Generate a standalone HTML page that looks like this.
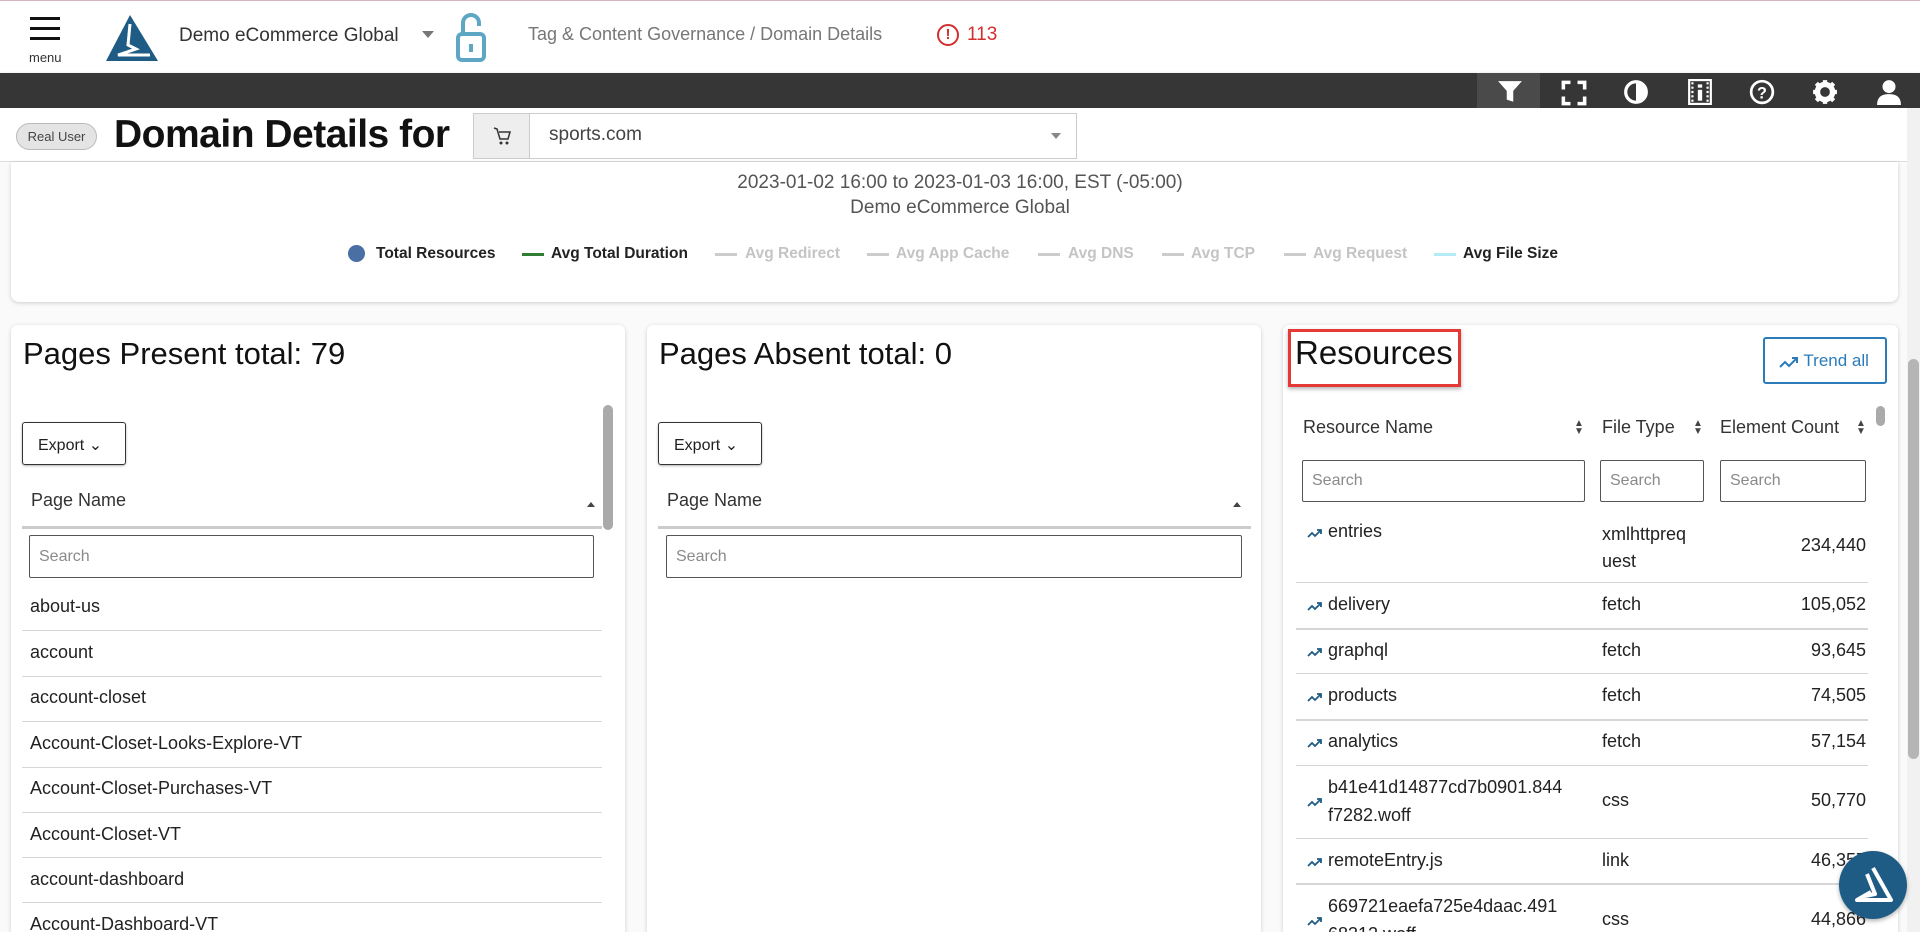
<!DOCTYPE html>
<html style="width:1920px;height:932px;overflow:hidden"><head><meta charset="utf-8">
<style>
*{box-sizing:border-box;margin:0;padding:0}
body{width:1920px;height:932px;overflow:hidden;background:#fafafa;font-family:"Liberation Sans",Arial,sans-serif;color:#212121;position:relative}
.a{position:absolute;white-space:nowrap}
.card{position:absolute;background:#fff;border-radius:6px;box-shadow:0 1px 4px rgba(0,0,0,.18)}
.inp{position:absolute;border:1px solid #555;border-radius:2px;background:#fff;color:#8a8a8a;font-size:16px;padding-left:9px;display:flex;align-items:center}
.row{position:absolute;font-size:18px;color:#222}
.hl{position:absolute;height:1px;background:#d6d6d6}
.ic{position:absolute;top:78px;width:26px;height:26px}
.leg{position:absolute;top:245px;font-size:15.5px;font-weight:bold;white-space:nowrap}
.ll{position:absolute;top:253px;width:22px;height:3px;background:#ccc}
.tr{position:absolute;width:16px;height:10px}
</style></head><body>
<!-- header -->
<div class="a" style="left:0;top:0;width:1920px;height:73px;background:#fff;border-top:1px solid #d8b4c0"></div>
<div class="a" style="left:30px;top:17px;width:30px;height:3px;background:#111;box-shadow:0 10px 0 #111,0 20px 0 #111"></div>
<div class="a" style="left:29px;top:50px;font-size:13px;color:#333">menu</div>
<svg class="a" style="left:106px;top:15px" width="52" height="46" viewBox="0 0 52 46"><polygon points="24,0 52,46 0,46" fill="#1f5c85"/><path d="M24 9 L22 30 L30 34 L12 40 L44 40" fill="none" stroke="#fff" stroke-width="3" stroke-linejoin="miter"/></svg>
<div class="a" style="left:179px;top:25px;font-size:19px;color:#333">Demo eCommerce Global</div>
<div class="a" style="left:422px;top:31px;width:0;height:0;border-left:6px solid transparent;border-right:6px solid transparent;border-top:7px solid #777"></div>
<svg class="a" style="left:455px;top:12px" width="32" height="50" viewBox="0 0 32 50"><path d="M8 22 V11 a8 8 0 0 1 16 0 V14" fill="none" stroke="#5ea7c4" stroke-width="4"/><rect x="3" y="22" width="26" height="26" rx="4" fill="none" stroke="#5ea7c4" stroke-width="4"/><rect x="14" y="32" width="4" height="8" fill="#5ea7c4"/></svg>
<div class="a" style="left:528px;top:24px;font-size:18px;color:#777">Tag &amp; Content Governance / Domain Details</div>
<div class="a" style="left:937px;top:24px;width:22px;height:22px;border:2px solid #d32f2f;border-radius:50%;color:#d32f2f;font-size:15px;font-weight:bold;text-align:center;line-height:18px">!</div>
<div class="a" style="left:967px;top:24px;font-size:19px;color:#d32f2f">113</div>
<!-- dark bar -->
<div class="a" style="left:0;top:73px;width:1920px;height:35px;background:#363636;box-shadow:0 2px 4px rgba(0,0,0,.4)"></div>
<div class="a" style="left:1477px;top:73px;width:63px;height:35px;background:#4a4a4a"></div>
<svg class="ic" style="left:1497px;top:79px" width="24" height="24" viewBox="0 0 24 24"><path d="M1 2h22l-8 9v10l-6-2v-8z" fill="#fff"/></svg>
<svg class="ic" style="left:1561px;top:80px" width="22" height="22" viewBox="0 0 22 22"><path d="M2 8V2h6M14 2h6v6M20 14v6h-6M8 20H2v-6" fill="none" stroke="#fff" stroke-width="3"/></svg>
<svg class="ic" style="left:1623px;top:79px" width="24" height="24" viewBox="0 0 24 24"><circle cx="12" cy="12" r="9.5" fill="none" stroke="#fff" stroke-width="3"/><path d="M12 2a10 10 0 0 1 0 20z" fill="#fff"/></svg>
<svg class="ic" style="left:1687px;top:79px" width="22" height="24" viewBox="0 0 22 24"><rect x="1" y="1" width="20" height="22" fill="none" stroke="#fff" stroke-width="2"/><path d="M4 3v18M18 3v18" stroke="#fff" stroke-width="2" stroke-dasharray="2 2"/><rect x="9" y="5" width="4" height="3" fill="#fff"/><rect x="9" y="10" width="4" height="10" fill="#fff"/></svg>
<svg class="ic" style="left:1749px;top:79px" width="24" height="24" viewBox="0 0 24 24"><circle cx="12" cy="12" r="10" fill="none" stroke="#fff" stroke-width="2.5"/><text x="12" y="18" font-size="15" font-weight="bold" fill="#fff" text-anchor="middle" font-family="Liberation Sans">?</text></svg>
<svg class="ic" style="left:1812px;top:79px" width="24" height="24" viewBox="0 0 24 24"><circle cx="12" cy="12" r="7" fill="none" stroke="#fff" stroke-width="5"/><path d="M12 1v6M12 17v6M1 12h6M17 12h6M4 4l4 4M16 16l4 4M4 20l4-4M16 8l4-4" stroke="#fff" stroke-width="4"/></svg>
<svg class="ic" style="left:1876px;top:79px" width="24" height="24" viewBox="0 0 24 24"><circle cx="12" cy="7" r="6" fill="#fff"/><path d="M1 24c0-8 5-10 11-10s11 2 11 10z" fill="#fff"/></svg>
<!-- title row -->
<div class="a" style="left:0;top:108px;width:1920px;height:54px;background:#fff;border-bottom:1px solid #ddd"></div>
<div class="a" style="left:16px;top:123px;width:81px;height:27px;border:1px solid #bbb;border-radius:14px;background:#e4e4e4;font-size:13px;color:#444;text-align:center;line-height:25px">Real User</div>
<div class="a" style="left:114px;top:113px;font-size:39px;font-weight:bold;color:#111;letter-spacing:-0.5px">Domain Details for</div>
<div class="a" style="left:473px;top:113px;width:604px;height:46px;border:1px solid #ccc;background:#fff"></div>
<div class="a" style="left:474px;top:114px;width:56px;height:44px;background:#eee;border-right:1px solid #ccc"></div>
<svg class="a" style="left:492px;top:126px" width="20" height="20" viewBox="0 0 20 20"><path d="M2 2l3 1 3 10h8l2-7H7" fill="none" stroke="#333" stroke-width="1.5"/><circle cx="9" cy="17" r="1.5" fill="#333"/><circle cx="15" cy="17" r="1.5" fill="#333"/></svg>
<div class="a" style="left:549px;top:124px;font-size:19px;color:#444">sports.com</div>
<div class="a" style="left:1051px;top:133px;width:0;height:0;border-left:5px solid transparent;border-right:5px solid transparent;border-top:6px solid #888"></div>
<!-- chart card -->
<div class="card" style="left:11px;top:162px;width:1887px;height:140px;border-radius:0 0 8px 8px"></div>
<div class="a" style="left:0;top:172px;width:1920px;text-align:center;font-size:19px;color:#555">2023-01-02 16:00 to 2023-01-03 16:00, EST (-05:00)</div>
<div class="a" style="left:0;top:197px;width:1920px;text-align:center;font-size:19px;color:#555">Demo eCommerce Global</div>
<div class="a" style="left:348px;top:245px;width:17px;height:17px;border-radius:50%;background:#4a6fa5"></div>
<div class="leg" style="left:376px;color:#222">Total Resources</div>
<div class="ll" style="left:522px;background:#2e7d32"></div><div class="leg" style="left:551px;color:#222">Avg Total Duration</div>
<div class="ll" style="left:715px"></div><div class="leg" style="left:745px;color:#c4c4c4">Avg Redirect</div>
<div class="ll" style="left:867px"></div><div class="leg" style="left:896px;color:#c4c4c4">Avg App Cache</div>
<div class="ll" style="left:1038px"></div><div class="leg" style="left:1068px;color:#c4c4c4">Avg DNS</div>
<div class="ll" style="left:1162px"></div><div class="leg" style="left:1191px;color:#c4c4c4">Avg TCP</div>
<div class="ll" style="left:1284px"></div><div class="leg" style="left:1313px;color:#c4c4c4">Avg Request</div>
<div class="ll" style="left:1434px;background:#b3ecf5"></div><div class="leg" style="left:1463px;color:#222">Avg File Size</div>
<!-- card 1 -->
<div class="card" style="left:11px;top:325px;width:614px;height:620px"></div>
<div class="a" style="left:23px;top:336px;font-size:31px;font-weight:500;color:#111">Pages Present total: 79</div>
<div class="a" style="left:603px;top:405px;width:10px;height:125px;border-radius:5px;background:#aaa"></div>
<div class="a" style="left:22px;top:422px;width:104px;height:43px;border:1px solid #333;border-radius:3px;box-shadow:0 1px 2px rgba(0,0,0,.3);font-size:16px;padding:12px 0 0 15px">Export &#8964;</div>
<div class="a" style="left:31px;top:490px;font-size:18px;color:#333">Page Name</div>
<div class="a" style="left:587px;top:502px;border-left:4px solid transparent;border-right:4px solid transparent;border-bottom:5px solid #444"></div>
<div class="a" style="left:22px;top:526px;width:580px;height:3px;background:#ccc"></div>
<div class="inp" style="left:29px;top:535px;width:565px;height:43px">Search</div>
<div class="row" style="left:30px;top:596px">about-us</div><div class="hl" style="left:22px;top:630px;width:580px"></div>
<div class="row" style="left:30px;top:642px">account</div><div class="hl" style="left:22px;top:676px;width:580px"></div>
<div class="row" style="left:30px;top:687px">account-closet</div><div class="hl" style="left:22px;top:721px;width:580px"></div>
<div class="row" style="left:30px;top:733px">Account-Closet-Looks-Explore-VT</div><div class="hl" style="left:22px;top:767px;width:580px"></div>
<div class="row" style="left:30px;top:778px">Account-Closet-Purchases-VT</div><div class="hl" style="left:22px;top:812px;width:580px"></div>
<div class="row" style="left:30px;top:824px">Account-Closet-VT</div><div class="hl" style="left:22px;top:857px;width:580px"></div>
<div class="row" style="left:30px;top:869px">account-dashboard</div><div class="hl" style="left:22px;top:902px;width:580px"></div>
<div class="row" style="left:30px;top:914px">Account-Dashboard-VT</div>
<!-- card 2 -->
<div class="card" style="left:647px;top:325px;width:614px;height:620px"></div>
<div class="a" style="left:659px;top:336px;font-size:31px;font-weight:500;color:#111">Pages Absent total: 0</div>
<div class="a" style="left:658px;top:422px;width:104px;height:43px;border:1px solid #333;border-radius:3px;box-shadow:0 1px 2px rgba(0,0,0,.3);font-size:16px;padding:12px 0 0 15px">Export &#8964;</div>
<div class="a" style="left:667px;top:490px;font-size:18px;color:#333">Page Name</div>
<div class="a" style="left:1233px;top:502px;border-left:4px solid transparent;border-right:4px solid transparent;border-bottom:5px solid #444"></div>
<div class="a" style="left:658px;top:526px;width:593px;height:3px;background:#ccc"></div>
<div class="inp" style="left:666px;top:535px;width:576px;height:43px">Search</div>
<!-- card 3 -->
<div class="card" style="left:1283px;top:325px;width:615px;height:620px"></div>
<div class="a" style="left:1288px;top:329px;width:173px;height:58px;border:3px solid #e53935;box-shadow:0 2px 4px rgba(0,0,0,.3)"></div>
<div class="a" style="left:1295px;top:334px;font-size:33px;font-weight:500;color:#111">Resources</div>
<div class="a" style="left:1763px;top:337px;width:124px;height:47px;border:2px solid #2b7bb9;border-radius:3px;color:#2b7bb9;font-size:17px;padding:12px 0 0 14px">
<svg width="20" height="12" viewBox="0 0 20 12" style="vertical-align:middle"><path d="M1 11l5-5 4 4 8-8M13 2h5v5" fill="none" stroke="#2b7bb9" stroke-width="2"/></svg> Trend all</div>
<div class="a" style="left:1876px;top:406px;width:9px;height:20px;border-radius:5px;background:#aaa"></div>
<div class="a" style="left:1303px;top:417px;font-size:18px;color:#333">Resource Name</div>
<div class="a" style="left:1574px;top:420px;font-size:10px;line-height:8px;color:#444">▲<br>▼</div>
<div class="a" style="left:1602px;top:417px;font-size:18px;color:#333">File Type</div>
<div class="a" style="left:1693px;top:420px;font-size:10px;line-height:8px;color:#444">▲<br>▼</div>
<div class="a" style="left:1720px;top:417px;font-size:18px;color:#333">Element Count</div>
<div class="a" style="left:1856px;top:420px;font-size:10px;line-height:8px;color:#444">▲<br>▼</div>
<div class="inp" style="left:1302px;top:460px;width:283px;height:42px">Search</div>
<div class="inp" style="left:1600px;top:460px;width:104px;height:42px">Search</div>
<div class="inp" style="left:1720px;top:460px;width:146px;height:42px">Search</div>
<!-- rows -->
<div class="row" style="left:1328px;top:521px">entries</div>
<div class="row" style="left:1602px;top:521px;line-height:27px">xmlhttpreq<br>uest</div>
<div class="row" style="left:1700px;top:535px;width:166px;text-align:right">234,440</div>
<div class="hl" style="left:1296px;top:582px;width:572px"></div>
<div class="row" style="left:1328px;top:594px">delivery</div><div class="row" style="left:1602px;top:594px">fetch</div><div class="row" style="left:1700px;top:594px;width:166px;text-align:right">105,052</div>
<div class="hl" style="left:1296px;top:628px;width:572px;height:2px"></div>
<div class="row" style="left:1328px;top:640px">graphql</div><div class="row" style="left:1602px;top:640px">fetch</div><div class="row" style="left:1700px;top:640px;width:166px;text-align:right">93,645</div>
<div class="hl" style="left:1296px;top:673px;width:572px"></div>
<div class="row" style="left:1328px;top:685px">products</div><div class="row" style="left:1602px;top:685px">fetch</div><div class="row" style="left:1700px;top:685px;width:166px;text-align:right">74,505</div>
<div class="hl" style="left:1296px;top:719px;width:572px;height:2px"></div>
<div class="row" style="left:1328px;top:731px">analytics</div><div class="row" style="left:1602px;top:731px">fetch</div><div class="row" style="left:1700px;top:731px;width:166px;text-align:right">57,154</div>
<div class="hl" style="left:1296px;top:765px;width:572px"></div>
<div class="row" style="left:1328px;top:773px;line-height:28px">b41e41d14877cd7b0901.844<br>f7282.woff</div>
<div class="row" style="left:1602px;top:790px">css</div><div class="row" style="left:1700px;top:790px;width:166px;text-align:right">50,770</div>
<div class="hl" style="left:1296px;top:838px;width:572px"></div>
<div class="row" style="left:1328px;top:850px">remoteEntry.js</div><div class="row" style="left:1602px;top:850px">link</div><div class="row" style="left:1700px;top:850px;width:166px;text-align:right">46,357</div>
<div class="hl" style="left:1296px;top:883px;width:572px;height:2px"></div>
<div class="row" style="left:1328px;top:892px;line-height:28px">669721eaefa725e4daac.491<br>68312.woff</div>
<div class="row" style="left:1602px;top:909px">css</div><div class="row" style="left:1700px;top:909px;width:166px;text-align:right">44,866</div>
<!-- trend icons -->
<svg class="tr" style="left:1307px;top:528px" viewBox="0 0 16 10"><path d="M1 9l4-4 3 3 6-6M10 2h4v4" fill="none" stroke="#1f5c85" stroke-width="1.8"/></svg>
<svg class="tr" style="left:1307px;top:601px" viewBox="0 0 16 10"><path d="M1 9l4-4 3 3 6-6M10 2h4v4" fill="none" stroke="#1f5c85" stroke-width="1.8"/></svg>
<svg class="tr" style="left:1307px;top:647px" viewBox="0 0 16 10"><path d="M1 9l4-4 3 3 6-6M10 2h4v4" fill="none" stroke="#1f5c85" stroke-width="1.8"/></svg>
<svg class="tr" style="left:1307px;top:692px" viewBox="0 0 16 10"><path d="M1 9l4-4 3 3 6-6M10 2h4v4" fill="none" stroke="#1f5c85" stroke-width="1.8"/></svg>
<svg class="tr" style="left:1307px;top:738px" viewBox="0 0 16 10"><path d="M1 9l4-4 3 3 6-6M10 2h4v4" fill="none" stroke="#1f5c85" stroke-width="1.8"/></svg>
<svg class="tr" style="left:1307px;top:797px" viewBox="0 0 16 10"><path d="M1 9l4-4 3 3 6-6M10 2h4v4" fill="none" stroke="#1f5c85" stroke-width="1.8"/></svg>
<svg class="tr" style="left:1307px;top:857px" viewBox="0 0 16 10"><path d="M1 9l4-4 3 3 6-6M10 2h4v4" fill="none" stroke="#1f5c85" stroke-width="1.8"/></svg>
<svg class="tr" style="left:1307px;top:916px" viewBox="0 0 16 10"><path d="M1 9l4-4 3 3 6-6M10 2h4v4" fill="none" stroke="#1f5c85" stroke-width="1.8"/></svg>
<!-- page scrollbar -->
<div class="a" style="left:1907px;top:108px;width:13px;height:824px;background:#f1f1f1"></div>
<div class="a" style="left:1908px;top:359px;width:11px;height:400px;border-radius:6px;background:#b5b5b5"></div>
<!-- floating logo -->
<div class="a" style="left:1839px;top:851px;width:68px;height:68px;border-radius:50%;background:#1f5c85;box-shadow:0 2px 4px rgba(0,0,0,.3)"></div>
<svg class="a" style="left:1851px;top:862px" width="44" height="44" viewBox="0 0 44 44"><path d="M22 6 L40 38 L6 38 L20 30 M16 12 L24 32 L14 34" fill="none" stroke="#fff" stroke-width="4" stroke-linejoin="round"/></svg>
</body></html>
